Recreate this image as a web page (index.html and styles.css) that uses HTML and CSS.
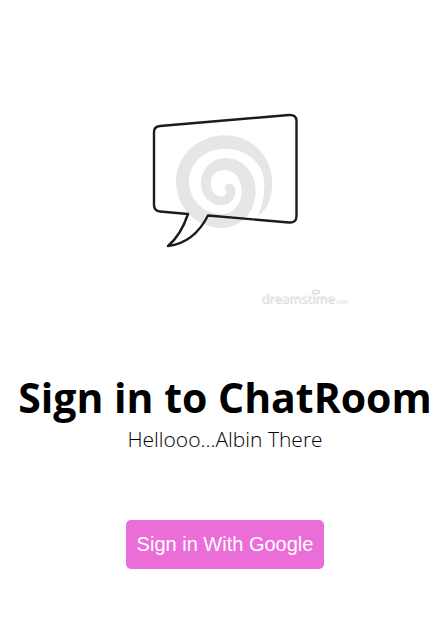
FILE: index.html
```html
<!DOCTYPE html>
<html lang="en">
<head>
<meta charset="utf-8">
<meta name="viewport" content="width=device-width, initial-scale=1">
<title>ChatRoom</title>
<link rel="stylesheet" href="styles.css">
</head>
<body>
<main class="login">
  <svg class="logo" viewBox="90 100 270 210" role="img" aria-label="Speech bubble">
    <path class="swirl" transform="translate(170 128) scale(.3333)" d="M262 265 C290 250 307 210 307 165 C307 85 245 22 165 22 C82 22 18 85 18 160 C18 240 80 300 155 300 C215 300 257 250 257 190 C257 132 218 90 165 90 C125 90 93 125 93 165 C93 205 120 232 155 232 C180 232 196 212 196 190 C196 172 186 166 176 167 C166 168 161 176 166 183 C172 193 168 205 155 205 C135 205 122 188 122 165 C122 142 140 126 165 126 C195 126 215 155 215 190 C215 228 190 258 155 258 C100 258 57 215 57 160 C57 105 105 62 165 62 C235 62 283 110 283 170 C283 210 275 240 262 265 Z"/>
    <path class="bubble" d="M160 126 L289 115 Q296.500 114.500 296.500 121 V216 Q296.500 223 289 222.500 L208 215.500 Q194 243 168 246 Q181 235 188 214 L160 211.500 Q154 211 154 205 V132 Q154 126.500 160 126 Z"/>
    <ellipse class="mark-dot" cx="316" cy="292" rx="3.500" ry="1.800"/>
    <text class="mark" x="261" y="303">dreamstime<tspan class="mark-small">.com</tspan></text>
  </svg>
  <h1 class="title">Sign in to ChatRoom</h1>
  <p class="subtitle">Hellooo...Albin There</p>
  <button class="signin" type="button">Sign in With Google</button>
</main>
</body>
</html>
```
FILE: styles.css
```css
body {
  margin: 0;
  background: #fff;
  color: #000;
  font-family: "Segoe UI", "Open Sans", "Noto Sans", sans-serif;
}

.login {
  display: flex;
  flex-direction: column;
  align-items: center;
  padding: 100px 0 56px 4px;
}

.logo {
  width: 270px;
  height: 210px;
}

.bubble {
  fill: none;
  stroke: #1c1c1c;
  stroke-width: 2.4;
  stroke-linejoin: round;
}

.swirl {
  fill: #e6e6e6;
}

.mark {
  fill: #eee;
  font: 400 13px "Open Sans", sans-serif;
  text-shadow: 1px 1px 1px #ccc;
}

.mark-small {
  font-size: 6px;
}

.mark-dot {
  fill: none;
  stroke: #dcdcdc;
  stroke-width: 1.5;
}

.title {
  margin: 57px 0 0;
  font-size: 41px;
  font-weight: 700;
  line-height: 60px;
  white-space: nowrap;
}

.subtitle {
  margin: 0;
  font-size: 21px;
  font-weight: 300;
  line-height: 24px;
}

.signin {
  margin-top: 69px;
  padding: 13px 11px;
  border: 0;
  border-radius: 5px;
  background: #eb6dd7;
  color: #fff;
  font-family: Arial, "Liberation Sans", sans-serif;
  font-size: 20px;
  line-height: 23px;
}
```
